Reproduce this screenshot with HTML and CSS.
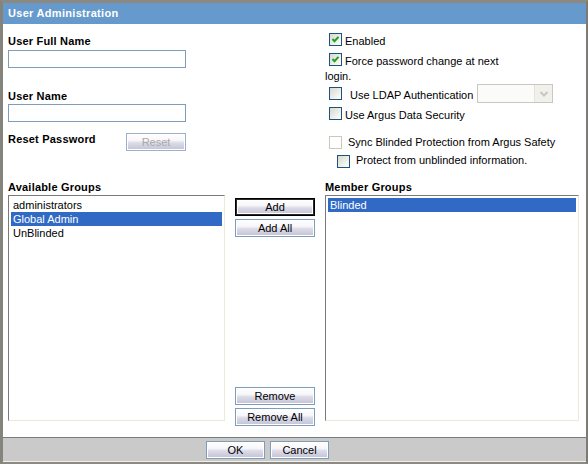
FILE: index.html
```html
<!DOCTYPE html>
<html>
<head>
<meta charset="utf-8">
<link rel="stylesheet" href="styles.css">
</head>
<body>
<div class="dialog">
  <div class="titlebar">User Administration</div>
  <div class="content">
    <div class="top">
      <div class="col-left">
        <div class="lbl lbl-full">User Full Name</div>
        <input class="txt txt-full" type="text">
        <div class="lbl lbl-name">User Name</div>
        <input class="txt txt-name" type="text">
        <div class="reset-row">
          <span class="lbl lbl-reset">Reset Password</span>
          <button class="btn btn-reset" disabled>Reset</button>
        </div>
      </div>
      <div class="col-right">
        <div class="row row-enabled">
          <span class="cb"><svg viewBox="0 0 11 11" width="11" height="11"><polyline points="2.5,5 4.5,7.2 8.5,2.8" fill="none" stroke="#21a121" stroke-width="2"/></svg></span>
          <span class="cb-text gap3">Enabled</span>
        </div>
        <div class="row row-force">
          <span class="cb"><svg viewBox="0 0 11 11" width="11" height="11"><polyline points="2.5,5 4.5,7.2 8.5,2.8" fill="none" stroke="#21a121" stroke-width="2"/></svg></span>
          <span class="cb-text gap3">Force password change at next</span>
        </div>
        <div class="login-line">login.</div>
        <div class="row row-ldap">
          <span class="cb"></span>
          <span class="cb-text gap8">Use LDAP Authentication</span>
          <div class="select">
            <div class="select-val"></div>
            <div class="select-btn"><svg viewBox="0 0 16 16" width="16" height="16"><polyline points="4.5,6 8,9.5 11.5,6" fill="none" stroke="#c8c8c0" stroke-width="2"/></svg></div>
          </div>
        </div>
        <div class="row row-argus">
          <span class="cb"></span>
          <span class="cb-text gap3">Use Argus Data Security</span>
        </div>
        <div class="row row-sync">
          <span class="cb cb-disabled"></span>
          <span class="cb-text gap6">Sync Blinded Protection from Argus Safety</span>
        </div>
        <div class="row row-protect">
          <span class="cb"></span>
          <span class="cb-text gap6">Protect from unblinded information.</span>
        </div>
      </div>
    </div>
    <div class="groups">
      <div class="group group-avail">
        <div class="lbl">Available Groups</div>
        <div class="listbox">
          <div class="item">administrators</div>
          <div class="item selected">Global Admin</div>
          <div class="item">UnBlinded</div>
        </div>
      </div>
      <div class="move-col">
        <button class="btn btn-move btn-focus">Add</button>
        <button class="btn btn-move btn-addall">Add All</button>
        <button class="btn btn-move btn-remove">Remove</button>
        <button class="btn btn-move btn-removeall">Remove All</button>
      </div>
      <div class="group group-member">
        <div class="lbl">Member Groups</div>
        <div class="listbox">
          <div class="item selected">Blinded</div>
        </div>
      </div>
    </div>
  </div>
  <div class="footer">
    <button class="btn btn-foot btn-ok">OK</button>
    <button class="btn btn-foot btn-cancel">Cancel</button>
  </div>
</div>
</body>
</html>
```

FILE: styles.css
```css
html, body {
  margin: 0;
  padding: 0;
  background: #ffffff;
}

body {
  font-family: "Liberation Sans", Arial, sans-serif;
  font-size: 11px;
  color: #000;
}

.dialog {
  width: 588px;
  height: 464px;
  box-sizing: border-box;
  border-top: 3px solid #8b8982;
  border-left: 3px solid #85847c;
  border-right: 2px solid #7c7b74;
  border-bottom: 2px solid #8b8982;
  display: flex;
  flex-direction: column;
  background: #fff;
}

.titlebar {
  height: 21px;
  line-height: 21px;
  background: #6699cc;
  color: #fff;
  font-weight: bold;
  font-size: 11px;
  letter-spacing: 0.3px;
  padding-left: 5px;
}

.content {
  height: 414px;
  padding-left: 5px;
  box-sizing: border-box;
}

.top {
  height: 157px;
  display: flex;
}

.col-left {
  width: 317px;
  display: flex;
  flex-direction: column;
  align-items: flex-start;
}

.lbl {
  font-weight: bold;
  line-height: 13px;
  letter-spacing: 0.2px;
}

.lbl-full { margin-top: 11px; }
.lbl-name { margin-top: 22px; }

.txt {
  display: block;
  width: 178px;
  height: 18px;
  box-sizing: border-box;
  border: 1px solid #7f9db9;
  margin: 0;
  padding: 0 2px;
  font: inherit;
  background: #fff;
}

.txt-full { margin-top: 2px; }
.txt-name { margin-top: 1px; }

.reset-row {
  display: flex;
  align-items: flex-start;
  margin-top: 11px;
}

.lbl-reset {
  width: 118px;
}

.btn {
  display: block;
  box-sizing: border-box;
  margin: 0;
  padding: 0;
  height: 18px;
  border: 1px solid #7f9db9;
  font-family: "Liberation Sans", Arial, sans-serif;
  font-size: 11px;
  line-height: 15px;
  color: #000;
  text-align: center;
  background: linear-gradient(to bottom, #ffffff 0%, #f7f7fa 40%, #dcdbe8 55%, #c9c8da 90%, #c2c1d4 100%);
  box-shadow: inset 0 0 0 1px #ffffff;
}

.btn-reset {
  width: 60px;
  color: #a8a8a8;
  border-color: #9cb0cc;
}

.col-right {
  flex: 1;
  display: flex;
  flex-direction: column;
  align-items: flex-start;
}

.row {
  display: flex;
  align-items: flex-start;
}

.cb {
  width: 13px;
  height: 13px;
  box-sizing: border-box;
  border: 1px solid #1c5180;
  background: linear-gradient(135deg, #d8d8d0 0%, #f4f4f0 70%, #ffffff 100%);
  margin-left: 4px;
  display: flex;
  align-items: center;
  justify-content: center;
  flex: none;
}

.cb-disabled {
  border-color: #cac8bb;
  background: #fff;
}

.cb-text {
  line-height: 13px;
  white-space: nowrap;
}

.gap3 { margin-left: 3px; }
.gap6 { margin-left: 6px; }
.gap8 { margin-left: 8px; }

.row-enabled { margin-top: 9px; }
.row-enabled .cb-text { margin-top: 2px; }

.row-force { margin-top: 5px; }
.row-force .cb-text { margin-top: 2px; }

.login-line {
  margin-top: 2px;
  line-height: 13px;
}

.row-ldap { margin-top: 1px; }
.row-ldap .cb { margin-top: 3px; }
.row-ldap .cb-text { margin-top: 5px; }

.select {
  margin-left: 4px;
  width: 76px;
  height: 19px;
  box-sizing: border-box;
  border: 1px solid #c9c8bd;
  background: #fbfbf9;
  display: flex;
}

.select-val {
  flex: 1;
}

.select-btn {
  width: 17px;
  height: 17px;
  background: #f1f0ea;
  border-left: 1px solid #e4e3dc;
  display: flex;
  align-items: center;
  justify-content: center;
}

.row-argus { margin-top: 4px; }
.row-argus .cb-text { margin-top: 2px; }

.row-sync { margin-top: 14px; }

.row-protect { margin-top: 5px; }
.row-protect .cb { margin-left: 12px; margin-top: 1px; }

.groups {
  display: flex;
  align-items: flex-start;
}

.group-avail { width: 217px; }
.group-member { width: 254px; margin-left: 10px; }

.listbox {
  margin-top: 1px;
  height: 226px;
  box-sizing: border-box;
  border: 1px solid;
  border-color: #7a7a7a #ece9d8 #ece9d8 #7a7a7a;
  padding: 2px 2px 0 2px;
  background: #fff;
}

.item {
  height: 14px;
  line-height: 14px;
  padding-left: 2px;
  white-space: nowrap;
}

.item.selected {
  background: #316ac5;
  color: #fff;
}

.move-col {
  width: 80px;
  margin-left: 10px;
  padding-top: 17px;
  display: flex;
  flex-direction: column;
}

.btn-move { width: 80px; }

.btn-focus {
  border-color: #000;
  box-shadow: inset 0 0 0 1px #2a2a2a, inset 0 0 0 2px #fff;
}

.btn-addall { margin-top: 3px; }
.btn-remove { margin-top: 150px; }
.btn-removeall { margin-top: 3px; }

.footer {
  height: 23px;
  border-top: 1px solid #7a7a7a;
  border-bottom: 1px solid #f0efe8;
  background: #cacaca;
  display: flex;
  align-items: flex-start;
  padding-left: 203px;
}

.btn-foot {
  width: 59px;
  margin-top: 3px;
}

.btn-cancel { margin-left: 5px; }
```
